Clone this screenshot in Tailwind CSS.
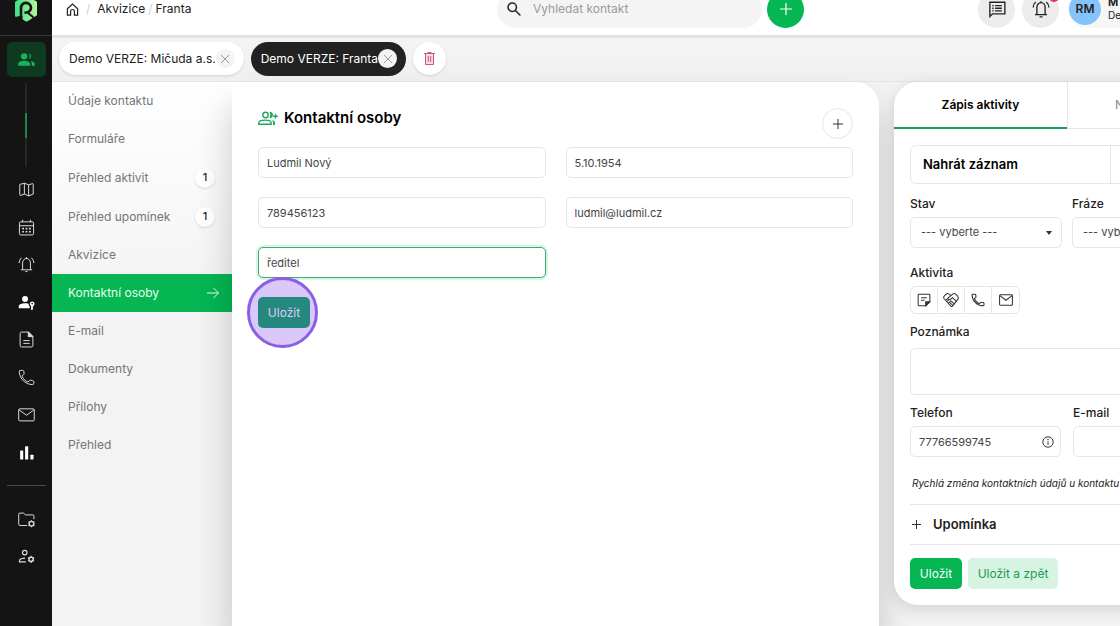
<!DOCTYPE html>
<html lang="cs">
<head>
    <meta charset="UTF-8">
    <meta name="viewport" content="width=device-width, initial-scale=1.0">
    <title>Kontaktní osoby</title>
    <script src="https://cdn.jsdelivr.net/npm/@tailwindcss/browser@4"></script>
</head>
<body class="flex h-screen overflow-hidden bg-[#f3f3f3] font-['Inter',sans-serif] text-[13px] text-[#222]">
    <!-- icon sidebar -->
    <aside class="flex w-[52px] shrink-0 flex-col items-center bg-[#141414] text-[#dcdcdc]">
        <a href="#" aria-label="Domů" class="flex h-9 w-full justify-center border-b border-[#3a3a3a]">
            <svg class="-mt-1 h-[26px] w-6" viewBox="0 0 24 26">
                <defs>
                    <linearGradient id="logo" x1="0" y1="0" x2="1" y2="0"><stop offset="0" stop-color="#3ee08a"/><stop offset="1" stop-color="#b4f59a"/></linearGradient>
                </defs>
                <path d="M12 .5L22 5q1 .5 1 1.500v12q0 1-1 1.500l-3.500 2L14 25q-1.500.8-3 0l-3-2H5L2 21q-1-.5-1-1.500V6.500Q1 5.500 2 5z" fill="url(#logo)"/>
                <path d="M7 20.500V12a5 4.800 0 1 1 5 4.500l-1.500.5" fill="none" stroke="#141414" stroke-width="2.600"/>
                <path d="M13.500 16.500l6 5" stroke="#141414" stroke-width="2"/>
                <path d="M5.500 20h3v5h-7v-4z" fill="#141414"/>
            </svg>
        </a>
        <a href="#" aria-label="Kontakty" class="mt-[6px] flex h-[35px] w-[39px] items-center justify-center rounded-[5px] bg-[#0e3a20] text-[#19b45a]">
            <svg class="h-[19px] w-[19px]" viewBox="0 0 24 24" fill="currentColor"><circle cx="9" cy="8" r="4"/><path d="M1.500 20v-2.500C1.500 15 5.500 13.500 9 13.500s7.500 1.500 7.500 4V20zM15 4.200a4 4 0 0 1 0 7.600c1.600-2.200 1.600-5.400 0-7.600zM17.500 13.800c2.700.6 5 1.900 5 3.700V20h-4v-2.500c0-1.500-.3-2.700-1-3.700z"/></svg>
        </a>
        <div class="mt-[6px] flex h-[84px] w-[2px] items-center bg-[#262626]"><span class="h-[25px] w-[2px] shrink-0 bg-[#1c8a4b]"></span></div>
        <nav class="mt-1 grid h-[300px] w-full grid-rows-8 [&>a]:flex [&>a]:items-center [&>a]:justify-center [&_svg]:h-[17px] [&_svg]:w-[17px] [&_svg]:ml-px">
            <a href="#" aria-label="Mapa"><svg viewBox="0 0 24 24" fill="none" stroke="currentColor" stroke-width="1.400"><path d="M2.500 5.500q0-1.500 1.500-1L9 3l6 2.500 5-1.700q1.500-.5 1.500 1.200v13.500L15 21l-6-2.500-5 1.700q-1.500.5-1.500-1zM9 3v15.500M15 5.500V21"/></svg></a>
            <a href="#" aria-label="Kalendář"><svg viewBox="0 0 24 24" fill="none" stroke="currentColor" stroke-width="1.400"><rect x="2" y="4" width="20" height="18.500" rx="2"/><path d="M2 9.500h20M6.500 1v3.500M17.500 1v3.500"/><path d="M6 13.500h2.500M10.800 13.500h2.500M15.500 13.500H18M6 18h2.500M10.800 18h2.500M15.500 18H18" stroke-width="2.400"/></svg></a>
            <a href="#" aria-label="Upozornění"><svg viewBox="0 0 24 24" fill="none" stroke="currentColor" stroke-width="1.400"><path d="M4 19.500h16M6.500 19.500V10a5.500 6.500 0 0 1 11 0v9.500M12 1.500V4M10.500 22h3M1.500 10q.2-4.500 3.500-7.500M22.500 10q-.2-4.500-3.500-7.500"/></svg></a>
            <a href="#" aria-label="Přístupy" class="text-white"><svg viewBox="0 0 24 24" fill="currentColor"><circle cx="10" cy="7" r="4.200"/><path d="M1 20v-2.500c0-3 4.500-4.500 9-4.500 1.800 0 3.500.2 5 .7 0 2 .8 3 1.500 3.600V20zM20 10.500a3.500 3.500 0 0 1 1.500 6.600v1.400l-1 1 1 1.200-1.800 2.300-1.200-1.200v-4.700A3.500 3.500 0 0 1 20 10.500zm0 1.800a1.200 1.200 0 1 0 0 2.400 1.200 1.200 0 0 0 0-2.400z"/></svg></a>
            <a href="#" aria-label="Dokumenty"><svg viewBox="0 0 24 24" fill="none" stroke="currentColor" stroke-width="1.400"><path d="M15 1.500H5A2 2 0 0 0 3 3.500v17a2 2 0 0 0 2 2h14a2 2 0 0 0 2-2v-13zM7.500 13.500h9M7.500 17.500h9"/><path d="M14.500 1.500v6.500H21z" fill="currentColor"/></svg></a>
            <a href="#" aria-label="Telefon"><svg viewBox="0 0 24 24" fill="none" stroke="currentColor" stroke-width="1.400"><path d="M3 2h3.500q1.500 0 1.800 1.500L8.500 6q.2 1.500-1 2.300L5.500 10C7.500 14 10 16.500 14 18.500l2-2q1-1 2.200-.7l2.500.5q1.600.4 1.600 1.800v2.200q0 1.700-1.700 1.700C10.500 22 2 13.500 1.800 3.500Q1.800 2 3 2z"/></svg></a>
            <a href="#" aria-label="E-mail"><svg viewBox="0 0 24 24" fill="none" stroke="currentColor" stroke-width="1.400"><rect x="1" y="4" width="22" height="17" rx="1.500"/><path d="M1.500 5.500L12 13l10.500-7.500"/></svg></a>
            <a href="#" aria-label="Statistiky" class="text-white"><svg viewBox="0 0 24 24" fill="currentColor"><rect x="3" y="9" width="4.400" height="13" rx="1"/><rect x="10" y="3" width="4.400" height="19" rx="1"/><rect x="17.500" y="15" width="4.400" height="7" rx="1"/></svg></a>
        </nav>
        <div class="mt-[14px] h-px w-[39px] bg-[#4a4a4a]"></div>
        <nav class="mt-[15px] grid w-full auto-rows-[37px] [&>a]:flex [&>a]:items-center [&>a]:justify-center [&_svg]:h-[17px] [&_svg]:w-[17px] [&_svg]:ml-px">
            <a href="#" aria-label="Nastavení složek"><svg viewBox="0 0 24 24" fill="none" stroke="currentColor" stroke-width="1.400"><path d="M13 20.500H2.500Q1 20.500 1 19V4.500Q1 3 2.500 3H8l2.500 2.500h10.500q1.500 0 1.500 1.500v4.500"/><circle cx="19" cy="18" r="3.300" stroke-width="2"/><path d="M19 13v2M19 21v2M14.700 15.500l1.500 1M21.800 19.500l1.500 1M14.700 20.500l1.500-1M21.800 16.500l1.500-1"/></svg></a>
            <a href="#" aria-label="Nastavení uživatelů"><svg viewBox="0 0 24 24" fill="none" stroke="currentColor" stroke-width="1.600"><circle cx="9.500" cy="6.500" r="3.200"/><path d="M11 19.500H2v-1.500c0-2.500 4-3.800 8-3.800"/><circle cx="18.500" cy="16" r="3" stroke-width="2"/><path d="M18.500 11v2M18.500 19v2M14.200 13.500l1.500 1M21.300 17.500l1.500 1M14.200 18.500l1.500-1M21.300 14.500l1.500-1"/></svg></a>
        </nav>
    </aside>

    <div class="flex min-w-0 flex-1 flex-col">
        <!-- top bar -->
        <header class="z-10 -mt-[17px] flex h-[53px] shrink-0 items-center border-b border-[#e2e2e2] bg-white shadow-sm">
            <nav aria-label="Drobečková navigace" class="flex flex-1 items-center pl-[14px] text-[12px]">
                <a href="#" aria-label="Domů"><svg class="h-[13px] w-[13px]" viewBox="0 0 24 24" fill="none" stroke="currentColor" stroke-width="2.200"><path d="M2.500 10.500L12 2l9.500 8.500V22.500H15.500V15q0-3-3.500-3t-3.500 3v7.500H2.500z"/></svg></a>
                <span class="mx-[7px] text-[#d0d0d0]">/</span>
                <a href="#">Akvizice</a>
                <span class="mx-[3px] text-[#d0d0d0]">/</span>
                <a href="#">Franta</a>
            </nav>
            <label class="flex h-[37px] w-[265px] items-center rounded-full bg-[#f4f4f4] pl-[10px]">
                <svg class="h-[14px] w-[14px] shrink-0" viewBox="0 0 24 24" fill="none" stroke="#222" stroke-width="2.600"><circle cx="9" cy="9" r="7.200"/><path d="M14 14l9 9"/></svg>
                <input type="text" aria-label="Vyhledat kontakt" placeholder="Vyhledat kontakt" class="ml-3 w-full bg-transparent text-[12px] outline-none placeholder:text-[#9b9b9b]">
            </label>
            <button aria-label="Přidat" class="ml-[5px] flex h-[37px] w-[37px] items-center justify-center rounded-full bg-[#05b653]">
                <svg class="h-3 w-3" viewBox="0 0 12 12" stroke="#fff" stroke-width="1.200"><path d="M6 0v12M0 6h12"/></svg>
            </button>
            <div class="ml-[174px] flex items-center">
                <button aria-label="Zprávy" class="flex h-[37px] w-[37px] items-center justify-center rounded-full bg-[#ececec]">
                    <svg class="h-[18px] w-[18px]" viewBox="0 0 24 24" fill="none" stroke="#222" stroke-width="1.800"><path d="M2.500 22V3h20v15.500H6zM9.500 7.500h9M9.500 11h9M9.500 14.500h9M5.700 7.500h2M5.700 11h2M5.700 14.500h2"/></svg>
                </button>
                <button aria-label="Upozornění" class="relative ml-[7px] flex h-[37px] w-[37px] items-center justify-center rounded-full bg-[#ececec]">
                    <svg class="h-[18px] w-[18px]" viewBox="0 0 24 24" fill="none" stroke="#222" stroke-width="1.800"><path d="M4 19.500h16M6.500 19.500V10a5.500 6.500 0 0 1 11 0v9.500M12 1.500V4M10 22.500h4M1.500 10q.2-4.500 3.500-7.500M22.500 10q-.2-4.500-3.500-7.500"/></svg>
                    <span class="absolute -right-0 top-px h-[10px] w-[10px] rounded-full bg-[#e5304f]"></span>
                </button>
                <button class="ml-[9px] flex h-[37px] w-[52px] items-center overflow-hidden rounded-l-full bg-[#f6f6f6] pl-px text-left">
                    <span class="flex h-8 w-8 shrink-0 items-center justify-center rounded-full bg-[#85c3fa] text-[12px] font-semibold">RM</span>
                    <span class="ml-[7px] text-[10px] leading-[13px]"><b class="block text-[11px]">M</b>De</span>
                </button>
            </div>
        </header>

        <!-- open contacts -->
        <div class="flex h-[46px] shrink-0 items-center gap-[7px] border-b border-[#e6e6e6] bg-linear-to-b from-[#f4f4f4] to-[#f0f0f0] pl-[7px] text-[12px]">
            <div class="flex h-[33px] items-center rounded-full bg-white pl-[10px] pr-[9px] shadow-sm">
                <a href="#">Demo VERZE: Mičuda a.s.</a>
                <button aria-label="Zavřít" class="flex h-[19px] w-[19px] items-center justify-center rounded-full bg-[#f3f3f3]"><svg class="h-2 w-2" viewBox="0 0 8 8" stroke="#999"><path d="M0 0l8 8M8 0L0 8"/></svg></button>
            </div>
            <div class="flex h-[34px] items-center rounded-full bg-[#222] pl-[10px] pr-[9px] text-white">
                <a href="#">Demo VERZE: Franta</a>
                <button aria-label="Zavřít" class="flex h-[19px] w-[19px] items-center justify-center rounded-full bg-[#f3f3f3]"><svg class="h-2 w-2" viewBox="0 0 8 8" stroke="#999"><path d="M0 0l8 8M8 0L0 8"/></svg></button>
            </div>
            <button aria-label="Zavřít vše" class="flex h-[33px] w-[33px] items-center justify-center rounded-full bg-white shadow-sm">
                <svg class="h-[13px] w-[11px]" viewBox="0 0 11 13" fill="#f6dbe2" stroke="#cf5476"><path d="M1.500 1.500v11h8v-11M0 1.500h11M3.500 .5h4M4.300 4v6M6.700 4v6"/></svg>
            </button>
        </div>

        <div class="flex min-h-0 flex-1">
            <nav aria-label="Kontakt" class="w-[180px] shrink-0 bg-linear-to-b from-white to-[#f3f3f3] to-40% text-[12px] text-[#757575] [&>a]:flex [&>a]:items-center [&>a]:justify-between [&>a]:pl-4 [&>a]:pr-[17px]">
                <a href="#" class="h-[38px]">Údaje kontaktu</a>
                <a href="#" class="h-[38px]">Formuláře</a>
                <a href="#" class="h-[39px]">Přehled aktivit <span class="flex h-5 w-5 items-center justify-center rounded-full bg-white text-[11px] font-medium text-[#222] shadow-sm">1</span></a>
                <a href="#" class="h-[39px]">Přehled upomínek <span class="flex h-5 w-5 items-center justify-center rounded-full bg-white text-[11px] font-medium text-[#222] shadow-sm">1</span></a>
                <a href="#" class="h-[38px]">Akvizice</a>
                <a href="#" class="h-[38px] bg-[#05b653] text-[#e6ffef]">Kontaktní osoby <svg class="mr-[-4px] h-3 w-3" viewBox="0 0 12 12" fill="none" stroke="currentColor"><path d="M0 6h11.500M6.500 1l5 5-5 5"/></svg></a>
                <a href="#" class="h-[38px]">E-mail</a>
                <a href="#" class="h-[38px]">Dokumenty</a>
                <a href="#" class="h-[38px]">Přílohy</a>
                <a href="#" class="h-[38px]">Přehled</a>
            </nav>

            <!-- contact persons -->
            <main class="min-w-0 flex-1 rounded-tr-[24px] bg-white px-[26px] pt-[26px] shadow-[0_24px_36px_rgba(0,0,0,0.200)]">
                <div class="flex items-start justify-between">
                    <h1 class="flex h-5 items-center gap-[6px] text-[15px] font-semibold text-black">
                        <svg class="h-5 w-5 text-[#1fa85c]" viewBox="0 0 20 20" fill="none" stroke="currentColor" stroke-width="1.400"><circle cx="7.500" cy="7" r="2.700"/><path d="M.8 16.300v-1.500c0-3.600 12.400-3.600 12.400 0v1.500z"/><path d="M11.500 3.700q3.500.2 3.500 3.300t-3.500 3.300q1.800-3.300 0-6.600zM14 12q3 .7 3 2.800v2.200h-2v-2.200q0-1.600-1-2.800z" fill="currentColor" stroke="none"/><path d="M17.500 6v4.500M15.300 8.200h4.500"/></svg>
                        Kontaktní osoby
                    </h1>
                    <button aria-label="Přidat osobu" class="flex h-[31px] w-[31px] items-center justify-center rounded-full border border-[#e6e6e6]">
                        <svg class="h-[10px] w-[10px]" viewBox="0 0 10 10" stroke="#333"><path d="M5 0v10M0 5h10"/></svg>
                    </button>
                </div>
                <form class="mt-2 grid grid-cols-2 gap-x-5 gap-y-[19px] text-[11px] text-[#444] [&>input]:h-[31px] [&>input]:w-full [&>input]:rounded-[5px] [&>input]:border [&>input]:px-2 [&>input]:outline-none">
                    <input type="text" aria-label="Jméno" value="Ludmil Nový" class="border-[#e6e6e6]">
                    <input type="text" aria-label="Datum narození" value="5.10.1954" class="border-[#e6e6e6]">
                    <input type="text" aria-label="Telefon" value="789456123" class="border-[#e6e6e6]">
                    <input type="text" aria-label="E-mail" value="ludmil@ludmil.cz" class="border-[#e6e6e6]">
                    <input type="text" aria-label="Pozice" value="ředitel" class="border-[#3fa873] shadow-[0_0_0_2px_#d5f7e3]">
                    <div class="relative col-start-1 w-[52px]">
                        <button type="button" class="h-[31px] w-full rounded-[5px] bg-[#05a856] text-[12px] text-white">Uložit</button>
                        <span class="pointer-events-none absolute -left-[11px] -top-5 h-[71px] w-[71px] rounded-full border-[3px] border-[#8b5ee6] bg-[#7c3aed]/28"></span>
                    </div>
                </form>
            </main>

            
            <section class="-mr-[120px] ml-[15px] w-[346px] shrink-0 self-start rounded-[24px] bg-white shadow-[0_4px_16px_rgba(0,0,0,0.140)]">
                <div class="grid h-[47px] grid-cols-2 text-[12px]">
                    <button class="border-b-2 border-[#1c9a58] font-semibold text-black">Zápis aktivity</button>
                    <button class="border-b border-l border-[#e6e6e6] pl-[47px] text-left text-[#888]">N</button>
                </div>
                <form class="px-4 pb-4 pt-4 text-[11px] text-[#444]">
                    <div class="flex h-[39px] items-stretch rounded-[6px] border border-[#e6e6e6] text-[13px] font-semibold text-black">
                        <button type="button" class="w-[200px] border-r border-[#e6e6e6] pl-3 text-left">Nahrát záznam</button>
                    </div>
                    <div class="mt-3 grid grid-cols-2 gap-x-[10px]">
                        <div>
                            <label for="stav" class="block h-[21px] text-[12px] font-medium leading-4 text-[#222]">Stav</label>
                            <div class="relative">
                                <select id="stav" class="h-[31px] w-full appearance-none rounded-[5px] border border-[#e6e6e6] bg-white pl-[10px] outline-none"><option>--- vyberte ---</option></select>
                                <span class="pointer-events-none absolute right-[10px] top-[14px] border-x-[3px] border-t-4 border-x-transparent border-t-[#333]"></span>
                            </div>
                        </div>
                        <div>
                            <label for="fraze" class="block h-[21px] text-[12px] font-medium leading-4 text-[#222]">Fráze</label>
                            <select id="fraze" class="h-[31px] w-full appearance-none rounded-[5px] border border-[#e6e6e6] bg-white pl-[10px] outline-none"><option>--- vyberte ---</option></select>
                        </div>
                    </div>
                    <p class="mt-[17px] h-[21px] text-[12px] font-medium leading-4 text-[#222]">Aktivita</p>
                    <div class="inline-flex h-7 divide-x divide-[#e6e6e6] rounded-[6px] border border-[#e6e6e6] align-top [&>button]:flex [&>button]:w-[27px] [&>button]:items-center [&>button]:justify-center [&_svg]:h-[14px] [&_svg]:w-[14px]">
                        <button type="button" aria-label="Poznámka"><svg viewBox="0 0 24 24" fill="none" stroke="#333" stroke-width="1.800"><path d="M22 15V3.500Q22 2 20.500 2h-17Q2 2 2 3.500v17Q2 22 3.500 22H15zM7 8h10M7 12.500h6"/><path d="M15 22v-7h7z" fill="#333"/></svg></button>
                        <button type="button" aria-label="Schůzka"><svg class="scale-115" viewBox="0 0 24 24" fill="none" stroke="#333" stroke-width="1.500"><path d="M12 5.500L8.500 2.800Q6.500 1.500 4.800 3.200L1.800 6.300Q.3 8.200 1.800 10.200l10 11q1.300 1.200 2.500 0l8-10.500q1.300-2-.2-4L18.500 3Q16.800 1.500 15 2.800L7.500 9q-.5 2.800 2.800 2.500l4-3 6.200 6.200M11.500 13l6 5.500M9.500 15l5.500 5.500M4 12.500l4.500-4M5.500 15l4-4M8 17.500l3.500-4"/></svg></button>
                        <button type="button" aria-label="Hovor"><svg viewBox="0 0 24 24" fill="none" stroke="#333" stroke-width="1.800"><path d="M3 2h3.500q1.500 0 1.800 1.500L8.500 6q.2 1.500-1 2.300L5.500 10C7.500 14 10 16.500 14 18.500l2-2q1-1 2.200-.7l2.500.5q1.600.4 1.600 1.800v2.200q0 1.700-1.700 1.700C10.500 22 2 13.500 1.800 3.500Q1.800 2 3 2z"/></svg></button>
                        <button type="button" aria-label="E-mail"><svg viewBox="0 0 24 24" fill="none" stroke="#333" stroke-width="1.800"><rect x="1" y="3" width="22" height="18" rx="1.500"/><path d="M1.500 4.500L12 12.500l10.500-8"/></svg></button>
                    </div>
                    <label for="poznamka" class="mt-[10px] block h-6 text-[12px] font-medium leading-4 text-[#222]">Poznámka</label>
                    <textarea id="poznamka" class="block h-[47px] w-full resize-none rounded-[5px] border border-[#e6e6e6] outline-none"></textarea>
                    <div class="mt-[10px] grid grid-cols-2 gap-x-3">
                        <div>
                            <label for="telefon" class="block h-[21px] text-[12px] font-medium leading-4 text-[#222]">Telefon</label>
                            <div class="relative">
                                <input id="telefon" type="text" value="77766599745" class="h-[31px] w-full rounded-[5px] border border-[#e6e6e6] px-2 outline-none">
                                <svg class="absolute right-[7px] top-[10px] h-3 w-3" viewBox="0 0 12 12" fill="none" stroke="#333"><circle cx="6" cy="6" r="5.200"/><path d="M6 5.300v3.500M6 3v1.200"/></svg>
                            </div>
                        </div>
                        <div>
                            <label for="email" class="block h-[21px] text-[12px] font-medium leading-4 text-[#222]">E-mail</label>
                            <input id="email" type="text" class="h-[31px] w-full rounded-[5px] border border-[#e6e6e6] px-2 outline-none">
                        </div>
                    </div>
                    <p class="mt-[18px] pl-[2px] text-[10px] italic leading-4 text-[#222]">Rychlá změna kontaktních údajů u kontaktu</p>
                    <button type="button" class="mt-[13px] flex h-[41px] w-full items-center gap-3 border-y border-[#e6e6e6] pl-[2px] text-[13px] font-semibold text-[#222]">
                        <svg class="h-[9px] w-[9px]" viewBox="0 0 9 9" stroke="#333"><path d="M4.500 0v9M0 4.500h9"/></svg>
                        Upomínka
                    </button>
                    <div class="mt-[13px] flex gap-[6px] text-[12px]">
                        <button type="button" class="h-[31px] w-[52px] rounded-[5px] bg-[#05b653] text-white">Uložit</button>
                        <button type="button" class="h-[31px] w-[90px] rounded-[5px] bg-[#d7f3e2] text-[#1a9c55]">Uložit a zpět</button>
                    </div>
                </form>
            </section>
        </div>
    </div>
</body>
</html>
